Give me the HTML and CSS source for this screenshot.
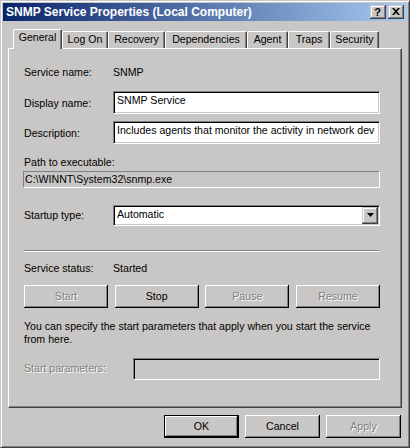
FILE: index.html
```html
<!DOCTYPE html>
<html>
<head>
<meta charset="utf-8">
<title>SNMP Service Properties</title>
<link rel="stylesheet" href="styles.css">
</head>
<body>
<div class="window">
  <div class="titlebar">
    <span class="title">SNMP Service Properties (Local Computer)</span>
    <div class="caption-btns">
      <span class="cbtn cbtn-help">?</span>
      <span class="cbtn cbtn-close"><svg width="8" height="7" viewBox="0 0 8 7"><path d="M0 0h2l2 2.2L6 0h2L5 3.5 8 7H6L4 4.8 2 7H0l3-3.5z" fill="#000"/></svg></span>
    </div>
  </div>
  <div class="client">
    <div class="tabs">
      <div class="tab tab-general active">General</div>
      <div class="tab tab-logon">Log On</div>
      <div class="tab tab-recovery">Recovery</div>
      <div class="tab tab-deps">Dependencies</div>
      <div class="tab tab-agent">Agent</div>
      <div class="tab tab-traps">Traps</div>
      <div class="tab tab-security">Security</div>
    </div>
    <div class="panel">
      <div class="row row-svc"><span class="label">Service name:</span><span class="value">SNMP</span></div>
      <div class="row row-display"><span class="label lbl-edit">Display name:</span><div class="edit">SNMP Service</div></div>
      <div class="row row-desc"><span class="label lbl-edit">Description:</span><div class="edit">Includes agents that monitor the activity in network dev</div></div>
      <div class="path-label">Path to executable:</div>
      <div class="path-box">C:\WINNT\System32\snmp.exe</div>
      <div class="row row-startup"><span class="label lbl-combo">Startup type:</span>
        <div class="combo"><span class="combo-text">Automatic</span><span class="combo-btn"><svg width="7" height="4" viewBox="0 0 7 4"><path d="M0 0h7L3.5 4z" fill="#000"/></svg></span></div>
      </div>
      <div class="sep"></div>
      <div class="row row-status"><span class="label">Service status:</span><span class="value">Started</span></div>
      <div class="svc-btns">
        <div class="btn disabled">Start</div>
        <div class="btn">Stop</div>
        <div class="btn disabled">Pause</div>
        <div class="btn disabled">Resume</div>
      </div>
      <p class="hint">You can specify the start parameters that apply when you start the service<br>from here.</p>
      <div class="row row-params"><span class="label lbl-params disabled">Start parameters:</span><div class="edit edit-disabled"></div></div>
    </div>
    <div class="actions">
      <div class="btn btn-default">OK</div>
      <div class="btn">Cancel</div>
      <div class="btn disabled">Apply</div>
    </div>
  </div>
</div>
</body>
</html>
```

FILE: styles.css
```css
:root {
  --face: #c9c7c5;
  --shadow: #808080;
  --dark: #404040;
  --light: #ffffff;
}
html, body {
  margin: 0;
  padding: 0;
  background: var(--face);
}
.window {
  width: 410px;
  height: 448px;
  box-sizing: border-box;
  background: var(--face);
  border: 1px solid var(--face);
  border-right-color: var(--dark);
  border-bottom-color: var(--dark);
  box-shadow: inset 1px 1px var(--light), inset -1px -1px var(--shadow);
  padding: 2px;
  font-family: "Liberation Sans", Arial, sans-serif;
  font-size: 10.6px;
  line-height: 13px;
  color: #000;
}
.titlebar {
  height: 18px;
  display: flex;
  align-items: center;
  padding: 0 3px 0 3px;
  background: linear-gradient(to right, #0a246a, #a6caf0);
  color: #fff;
  font-weight: bold;
  font-size: 12px;
  line-height: 18px;
}
.title { white-space: nowrap; }
.caption-btns {
  margin-left: auto;
  display: flex;
  gap: 2px;
}
.cbtn {
  width: 16px;
  height: 14px;
  box-sizing: border-box;
  background: var(--face);
  box-shadow: inset -1px -1px var(--dark), inset 1px 1px var(--face), inset -2px -2px var(--shadow), inset 2px 2px var(--light);
  display: flex;
  align-items: center;
  justify-content: center;
  color: #000;
}
.cbtn-help {
  font-size: 11px;
  line-height: 14px;
  padding-right: 1px;
  padding-bottom: 1px;
}
.cbtn-close svg { display: block; margin-right: 1px; margin-bottom: 1px; }
.client {
  padding: 0 5px;
}
.tabs {
  margin-top: 8px;
  height: 20px;
  margin-bottom: -1px;
  padding-left: 5px;
  display: flex;
  align-items: flex-end;
  position: relative;
  z-index: 1;
}
.tab {
  box-sizing: border-box;
  height: 17px;
  margin-bottom: 1px;
  padding-top: 1px;
  text-align: center;
  white-space: nowrap;
  background: var(--face);
  border-top: 1px solid var(--light);
  border-left: 1px solid var(--light);
  border-right: 1px solid var(--dark);
  box-shadow: inset -1px 0 var(--shadow);
  border-top-left-radius: 2px;
  border-top-right-radius: 2px;
}
.tab.active {
  height: 20px;
  margin-bottom: 0;
  padding-top: 1px;
}
.tab-general { width: 49px; }
.tab-logon { width: 46px; }
.tab-recovery { width: 57px; }
.tab-deps { width: 82px; }
.tab-agent { width: 41px; }
.tab-traps { width: 42px; }
.tab-security { width: 49px; }
.panel {
  width: 394px;
  height: 360px;
  box-sizing: border-box;
  border-top: 1px solid var(--light);
  border-left: 1px solid var(--light);
  border-right: 1px solid var(--dark);
  border-bottom: 1px solid var(--dark);
  box-shadow: inset -1px -1px var(--shadow);
  padding: 0 21px 0 15px;
  display: flow-root;
}
.row {
  display: flex;
  align-items: flex-start;
}
.label {
  width: 89px;
  flex: none;
  white-space: nowrap;
}
.row-svc { margin-top: 17px; }
.row-display { margin-top: 12px; }
.row-desc { margin-top: 7px; }
.lbl-edit { padding-top: 6px; }
.edit {
  flex: 1;
  height: 23px;
  box-sizing: border-box;
  background: #fff;
  border-top: 1px solid var(--shadow);
  border-left: 1px solid var(--shadow);
  border-right: 1px solid var(--light);
  border-bottom: 1px solid var(--light);
  box-shadow: inset 1px 1px #000, inset -1px -1px var(--face);
  padding: 2px 3px 0 3px;
  white-space: nowrap;
  overflow: hidden;
}
.path-label { margin-top: 12px; }
.path-box {
  margin-top: 2px;
  margin-left: -1px;
  width: 357px;
  height: 17px;
  box-sizing: border-box;
  border-top: 1px solid var(--shadow);
  border-left: 1px solid var(--shadow);
  border-right: 1px solid var(--light);
  border-bottom: 1px solid var(--light);
  padding: 1px 1px 0 1px;
  white-space: nowrap;
}
.row-startup { margin-top: 17px; }
.lbl-combo { padding-top: 4px; }
.combo {
  flex: 1;
  height: 21px;
  box-sizing: border-box;
  background: #fff;
  border-top: 1px solid var(--shadow);
  border-left: 1px solid var(--shadow);
  border-right: 1px solid var(--light);
  border-bottom: 1px solid var(--light);
  box-shadow: inset 1px 1px #000, inset -1px -1px var(--face);
  padding: 1px;
  display: flex;
}
.combo-text {
  flex: 1;
  padding: 1px 0 0 2px;
}
.combo-btn {
  width: 16px;
  height: 17px;
  box-sizing: border-box;
  background: var(--face);
  box-shadow: inset -1px -1px var(--dark), inset 1px 1px var(--face), inset -2px -2px var(--shadow), inset 2px 2px var(--light);
  display: flex;
  align-items: center;
  justify-content: center;
}
.combo-btn svg { display: block; margin-bottom: 1px; }
.sep {
  margin-top: 24px;
  width: 355px;
  height: 0;
  border-top: 1px solid var(--shadow);
  border-bottom: 1px solid var(--light);
}
.row-status { margin-top: 10px; }
.svc-btns {
  margin-top: 10px;
  display: flex;
  justify-content: space-between;
}
.svc-btns .btn { width: 84px; }
.btn {
  width: 75px;
  height: 23px;
  box-sizing: border-box;
  background: var(--face);
  box-shadow: inset -1px -1px #000, inset 1px 1px var(--light), inset -2px -2px var(--shadow);
  display: flex;
  align-items: center;
  justify-content: center;
  padding-bottom: 1px;
}
.disabled {
  color: var(--shadow);
  text-shadow: 1px 1px 0 var(--light);
}
.hint {
  margin: 12px 0 0 0;
}
.row-params { margin-top: 12px; }
.lbl-params { width: 109px; padding-top: 4px; }
.edit-disabled {
  height: 22px;
  background: var(--face);
}
.actions {
  margin-top: 7px;
  padding-right: 1px;
  display: flex;
  justify-content: flex-end;
  gap: 6px;
}
.btn-default {
  border: 1px solid #000;
}
```
